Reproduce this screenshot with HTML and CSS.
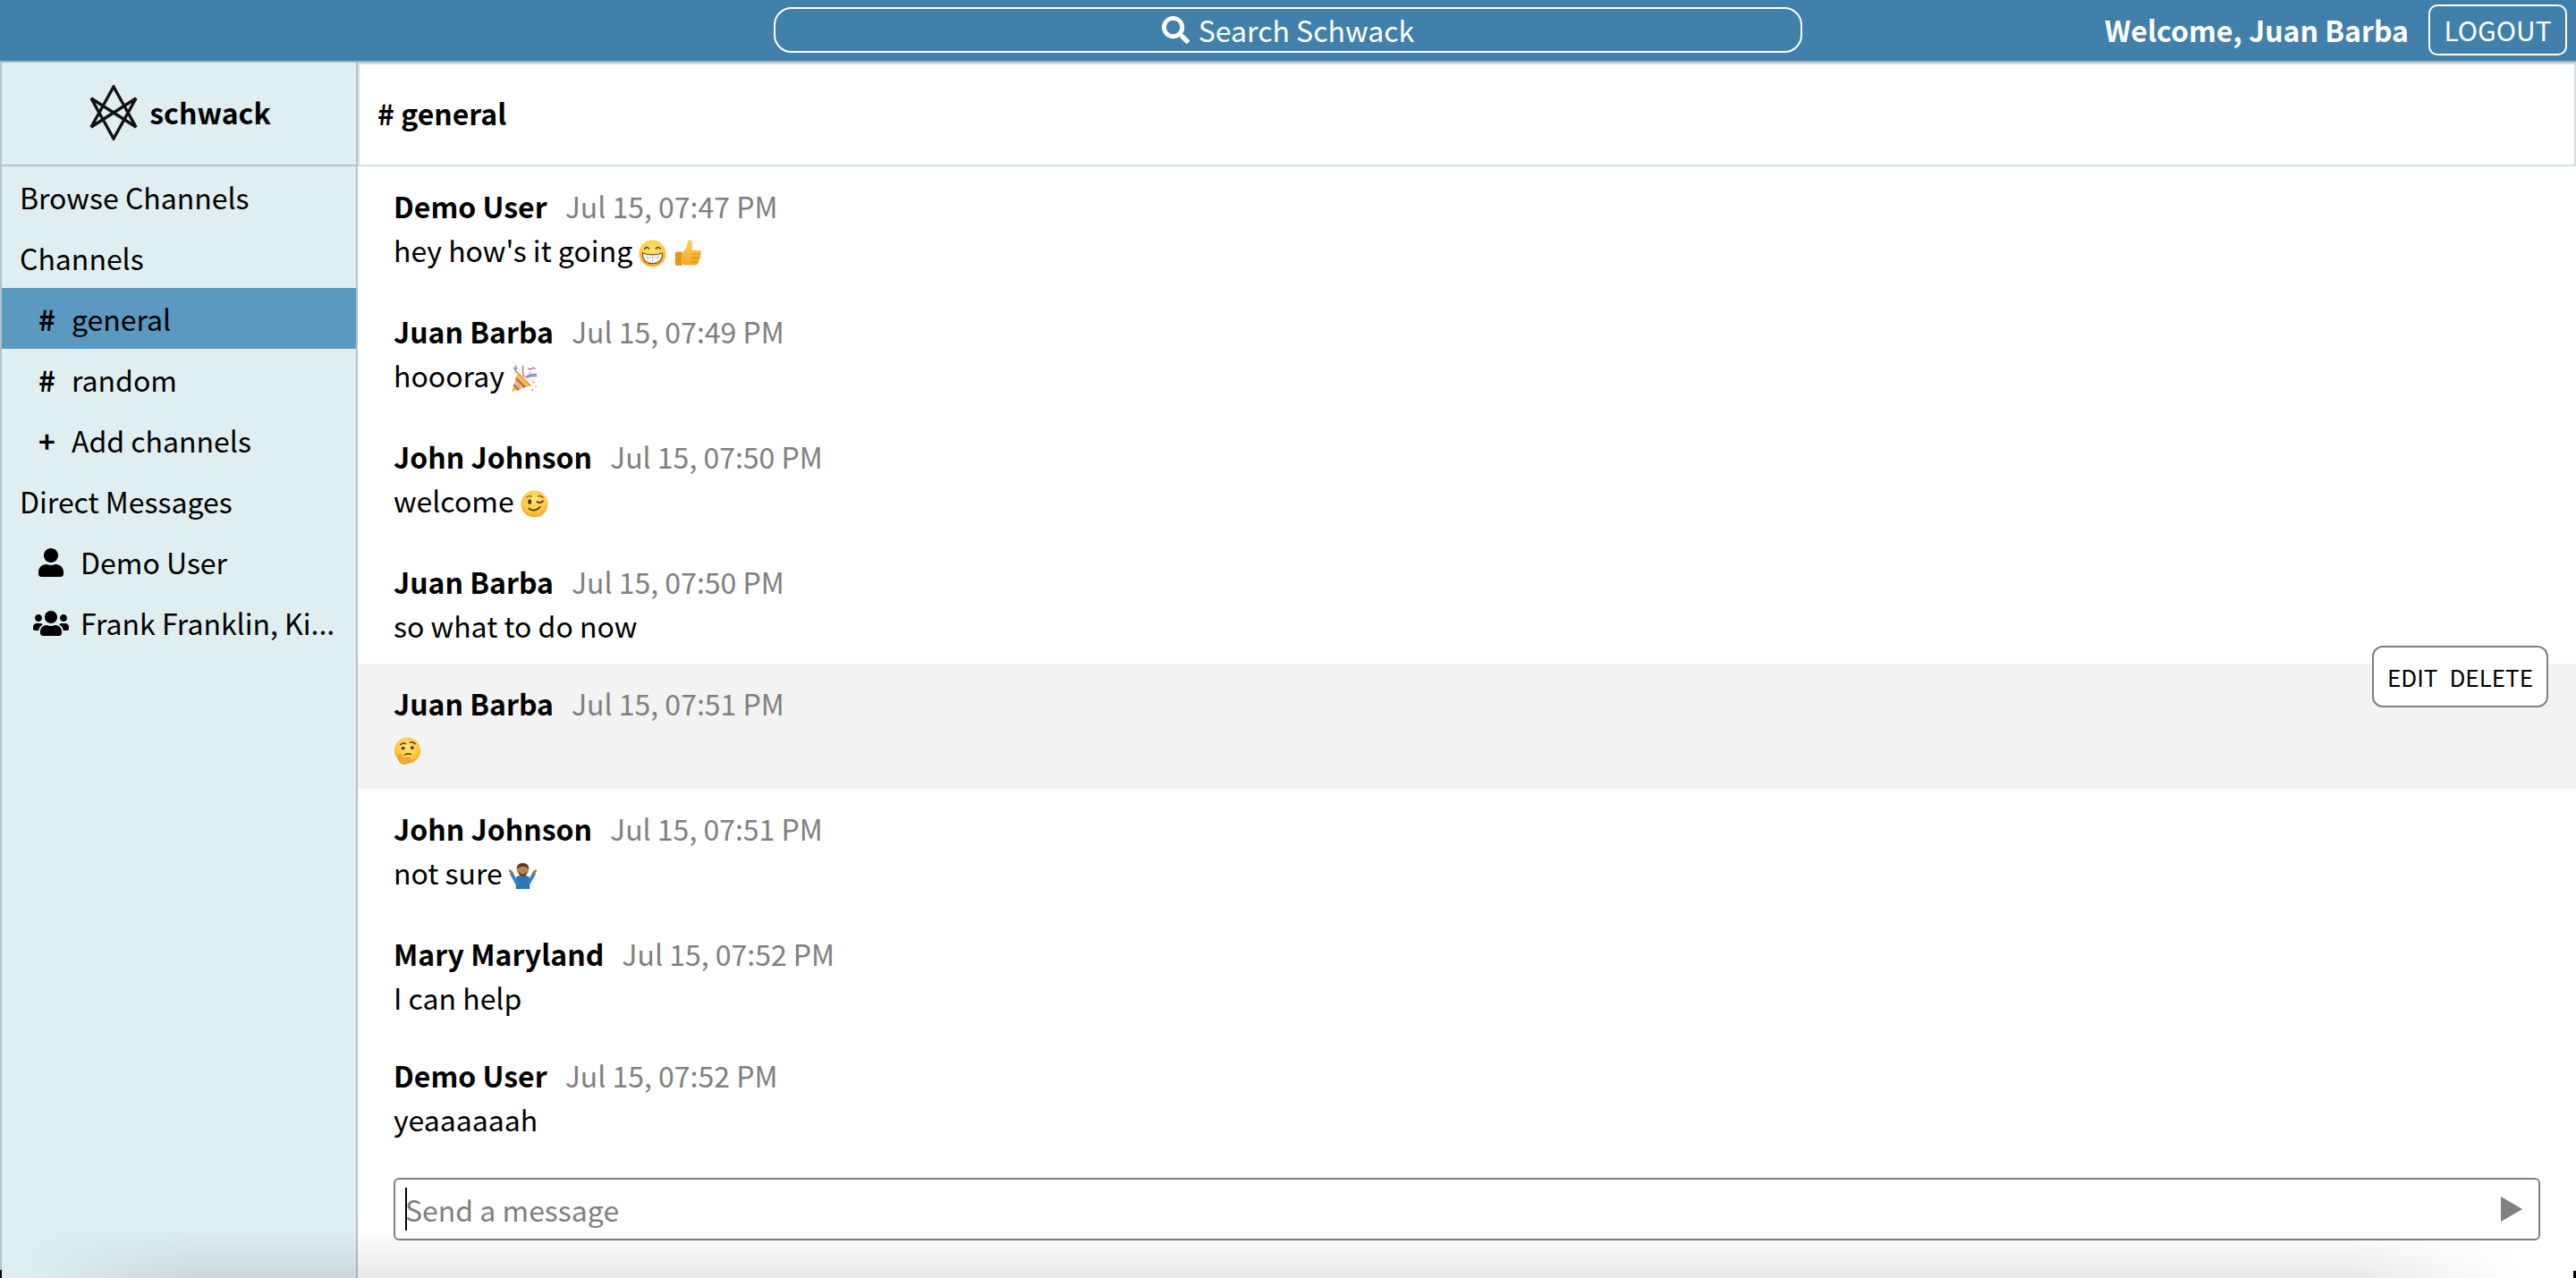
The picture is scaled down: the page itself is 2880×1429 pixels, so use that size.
FILE: index.html
```html
<!DOCTYPE html>
<html lang="en">
<head>
    <meta charset="UTF-8">
    <title>schwack</title>
    <link rel="stylesheet" href="styles.css">
</head>
<body>
    <svg class="defs" width="0" height="0" aria-hidden="true">
        <defs>
            <radialGradient id="faceFill" cx="50%" cy="35%" r="70%">
                <stop offset="0" stop-color="#ffe27a"/>
                <stop offset="0.65" stop-color="#fdc83f"/>
                <stop offset="1" stop-color="#f39a1d"/>
            </radialGradient>
            <linearGradient id="thumbFill" x1="0" y1="0" x2="0" y2="1">
                <stop offset="0" stop-color="#fdd35a"/>
                <stop offset="1" stop-color="#f5a623"/>
            </linearGradient>
        </defs>
    </svg>

    <header class="topbar">
        <div class="topbar-search">
            <button class="search-button">
                <svg class="search-icon" viewBox="0 0 512 512"><path d="M505 442.7L405.3 343c-4.5-4.5-10.6-7-17-7H372c27.6-35.3 44-79.7 44-128C416 93.1 322.9 0 208 0S0 93.1 0 208s93.1 208 208 208c48.3 0 92.7-16.4 128-44v16.3c0 6.4 2.5 12.5 7 17l99.7 99.7c9.4 9.4 24.6 9.4 33.9 0l28.3-28.3c9.4-9.4 9.4-24.6.1-34zM208 336c-70.7 0-128-57.2-128-128 0-70.7 57.2-128 128-128 70.7 0 128 57.2 128 128 0 70.7-57.2 128-128 128z"/></svg>
                Search Schwack
            </button>
        </div>
        <div class="topbar-user">
            <span class="welcome">Welcome, Juan Barba</span>
            <button class="logout">LOGOUT</button>
        </div>
    </header>

    <div class="layout">
        <aside class="sidebar">
            <div class="brand">
                <svg class="brand-logo" viewBox="0 0 54 62"><path d="M27 2 L52 47 L2 15 L27 60 L52 15 L2 47 Z"/></svg>
                <span>schwack</span>
            </div>
            <nav class="nav">
                <div class="nav-row">Browse Channels</div>
                <div class="nav-row">Channels</div>
                <div class="nav-row nav-sub nav-active"><span class="nav-mark">#</span>general</div>
                <div class="nav-row nav-sub"><span class="nav-mark">#</span>random</div>
                <div class="nav-row nav-sub"><span class="nav-mark">+</span>Add channels</div>
                <div class="nav-row">Direct Messages</div>
                <div class="nav-row nav-dm">
                    <span class="dm-icon"><svg class="user-icon" viewBox="0 0 448 512"><path d="M224 256c70.7 0 128-57.3 128-128S294.7 0 224 0 96 57.3 96 128s57.3 128 128 128zm89.6 32h-16.7c-22.2 10.2-46.9 16-72.9 16s-50.6-5.8-72.9-16h-16.7C60.2 288 0 348.2 0 422.4V464c0 26.5 21.5 48 48 48h352c26.5 0 48-21.5 48-48v-41.6c0-74.2-60.2-134.4-134.4-134.4z"/></svg></span>
                    <span class="dm-name">Demo User</span>
                </div>
                <div class="nav-row nav-dm">
                    <span class="dm-icon"><svg class="users-icon" viewBox="0 0 640 512"><path d="M96 224c35.3 0 64-28.7 64-64s-28.7-64-64-64-64 28.7-64 64 28.7 64 64 64zm448 0c35.3 0 64-28.7 64-64s-28.7-64-64-64-64 28.7-64 64 28.7 64 64 64zm32 32h-64c-17.6 0-33.5 7.1-45.1 18.6 40.3 22.1 68.9 62 75.1 109.4h66c17.7 0 32-14.3 32-32v-32c0-35.3-28.7-64-64-64zm-256 0c61.9 0 112-50.1 112-112S381.9 32 320 32 208 82.1 208 144s50.1 112 112 112zm76.8 32h-8.3c-20.8 10-43.9 16-68.5 16s-47.6-6-68.5-16h-8.3C179.6 288 128 339.6 128 403.2V432c0 26.5 21.5 48 48 48h288c26.5 0 48-21.5 48-48v-28.8c0-63.6-51.6-115.2-115.2-115.2zm-223.7-13.4C161.5 263.1 145.6 256 128 256H64c-35.3 0-64 28.7-64 64v32c0 17.7 14.3 32 32 32h65.9c6.3-47.4 34.9-87.3 75.2-109.4z"/></svg></span>
                    <span class="dm-name">Frank Franklin, Ki...</span>
                </div>
            </nav>
        </aside>

        <main class="main">
            <div class="channel-title"># general</div>

            <div class="messages">
                <div class="message message-emoji">
                    <div class="message-head"><span class="author">Demo User</span><span class="time">Jul 15, 07:47 PM</span></div>
                    <div class="message-text">hey how's it going
                        <svg class="emoji" viewBox="0 0 32 32"><circle cx="16" cy="16" r="15.5" fill="url(#faceFill)"/><path d="M7 10.5q2.5-3.5 5 0M20 10.5q2.5-3.5 5 0" fill="none" stroke="#6b3f10" stroke-width="1.6" stroke-linecap="round"/><path d="M4.5 15.5q11.500 4 23 0q0 12-11.500 12t-11.500-12z" fill="#fff" stroke="#7a4a12" stroke-width="1.200"/><path d="M5.500 20.500h21M10 17v9.500M16 18v9.500M22 17v9.500" stroke="#b9b9b9" stroke-width="0.800"/></svg>
                        <svg class="emoji" viewBox="0 0 32 32"><path d="M2 16q0-2 2-2h5q1 0 1 1v14q0 1-1 1H4q-2 0-2-2z" fill="#e8951c"/><path d="M10 15q5-4 6-10 0-5 3-5 4 1 2 12h8q3 0 3 3 0 2-1 2.500 1 1.500 0 3-.5 1-1 1.500.5 2-1 3-1 4.500-4 4.500H16q-4 0-6-2z" fill="url(#thumbFill)"/><path d="M21 16.500h9M21 21h8.500M21 25.500h7" stroke="#d98512" stroke-width="1.100" stroke-linecap="round"/></svg>
                    </div>
                </div>
                <div class="message message-emoji">
                    <div class="message-head"><span class="author">Juan Barba</span><span class="time">Jul 15, 07:49 PM</span></div>
                    <div class="message-text">hoooray
                        <svg class="emoji" viewBox="0 0 32 32"><path d="M1 31 8 9l15 15z" fill="#f6c03a"/><path d="M6 15.500 16.500 26M3.500 23 9.500 29" stroke="#a35fc4" stroke-width="2.400"/><path d="M8 9l15 15" stroke="#d9951f" stroke-width="1.500"/><path d="M5 1q3 2 1 4t2 4M14 1v8q0 3 2 5M20 4q3 2 5 0t3 1M18 15q5-3 12-2" fill="none" stroke="#e84b6f" stroke-width="1.300"/><path d="M3 3q3 1 2 3M17 14q6-4 13-3" fill="none" stroke="#4d8fe8" stroke-width="1.600"/><circle cx="26" cy="20" r="1.200" fill="#f08aa5"/><circle cx="29" cy="25" r="1" fill="#e8b44d"/><circle cx="25" cy="29" r="1.200" fill="#f08aa5"/><circle cx="22" cy="9" r="1" fill="#6ab0e8"/></svg>
                    </div>
                </div>
                <div class="message message-emoji">
                    <div class="message-head"><span class="author">John Johnson</span><span class="time">Jul 15, 07:50 PM</span></div>
                    <div class="message-text">welcome
                        <svg class="emoji" viewBox="0 0 32 32"><circle cx="16" cy="16" r="15.500" fill="url(#faceFill)"/><ellipse cx="10.500" cy="13.500" rx="2" ry="3" fill="#5b3510"/><path d="M19 13.500q3.500 2.500 7-1" fill="none" stroke="#5b3510" stroke-width="1.800" stroke-linecap="round"/><path d="M7 8.500q3-2.500 6-1M20 7q3-1 6 1.500" fill="none" stroke="#8a5a18" stroke-width="1.300" stroke-linecap="round"/><path d="M9.500 21q6 5.500 13-1.500" fill="none" stroke="#5b3510" stroke-width="1.800" stroke-linecap="round"/></svg>
                    </div>
                </div>
                <div class="message">
                    <div class="message-head"><span class="author">Juan Barba</span><span class="time">Jul 15, 07:50 PM</span></div>
                    <div class="message-text">so what to do now</div>
                </div>
                <div class="message message-emoji message-hover">
                    <div class="message-head"><span class="author">Juan Barba</span><span class="time">Jul 15, 07:51 PM</span></div>
                    <div class="message-text">
                        <svg class="emoji" viewBox="0 0 32 32"><circle cx="16" cy="15.500" r="15" fill="url(#faceFill)"/><path d="M8 9q3-3 6-1M19 6.500q3-1.500 6 1.500" fill="none" stroke="#5b3510" stroke-width="1.500" stroke-linecap="round"/><circle cx="11" cy="13" r="2" fill="#5b3510"/><circle cx="21.500" cy="12.500" r="2" fill="#5b3510"/><path d="M13 20.500q4-2 7-.5" fill="none" stroke="#5b3510" stroke-width="1.500" stroke-linecap="round"/><path d="M6 22q-1 4 1 7 2 3 6 2.500 5-1 6-5 1-2-.5-2.500-2-1-3.500 1l-4-1q-2-4-3-4-1 0-2 2z" fill="#f9ac2b" stroke="#d47f12" stroke-width="0.600"/></svg>
                    </div>
                    <div class="message-actions"><span>Edit</span><span>Delete</span></div>
                </div>
                <div class="message message-emoji">
                    <div class="message-head"><span class="author">John Johnson</span><span class="time">Jul 15, 07:51 PM</span></div>
                    <div class="message-text">not sure
                        <svg class="emoji" viewBox="0 0 32 32"><path d="M8 31V20q0-4 4-4.500h8q4 .5 4 4.500v11z" fill="#2f74b8"/><path d="M9 24 3 13M23 24l6-11" stroke="#3a82c8" stroke-width="4" stroke-linecap="round"/><path d="M1 10q2 1 3 3M31 10q-2 1-3 3" stroke="#a8744a" stroke-width="2.600" stroke-linecap="round"/><circle cx="16" cy="8.500" r="7" fill="#b98559"/><path d="M9 8q0-7 7-7t7 7q-3-3-7-3t-7 3z" fill="#5e3a22"/><path d="M11 11q5 6 10 0v1q-1 4-5 4t-5-4z" fill="#5e3a22"/></svg>
                    </div>
                </div>
                <div class="message">
                    <div class="message-head"><span class="author">Mary Maryland</span><span class="time">Jul 15, 07:52 PM</span></div>
                    <div class="message-text">I can help</div>
                </div>
                <div class="message">
                    <div class="message-head"><span class="author">Demo User</span><span class="time">Jul 15, 07:52 PM</span></div>
                    <div class="message-text">yeaaaaaah</div>
                </div>
            </div>

            <form class="composer">
                <span class="caret"></span>
                <input class="composer-input" type="text" placeholder="Send a message">
                <svg class="send-icon" viewBox="0 0 24 28"><path d="M0 0 24 14 0 28z"/></svg>
            </form>
        </main>
    </div>

    <div class="window-shadow"></div>
    <div class="corner corner-left"></div>
    <div class="corner corner-right"></div>
</body>
</html>
```

FILE: styles.css
```css
* {
    box-sizing: border-box;
}
html, body {
    height: 100%;
}
body {
    position: relative;
    display: flex;
    flex-direction: column;
    height: 1429px;
    margin: 0;
    overflow: hidden;
    background-color: #fff;
    color: #000;
    font-family: "Noto Sans CJK JP", "Noto Sans", sans-serif;
    font-size: 32px;
}
button, input {
    font-family: inherit;
    font-size: inherit;
}
.defs {
    position: absolute;
}

/* top bar */
.topbar {
    display: flex;
    flex: none;
    align-items: center;
    height: 70px;
    padding-bottom: 2px;
    background-color: #4280ac;
    border-bottom: 2px solid #a5b9c5;
    color: #fff;
}
.topbar-search {
    flex: none;
    width: 2025px;
    padding-left: 865px;
}
.search-button {
    display: flex;
    align-items: center;
    justify-content: center;
    width: 1150px;
    height: 51px;
    padding: 0;
    background: none;
    border: 2px solid #fff;
    border-radius: 20px;
    color: #fff;
    line-height: 1;
}
.search-icon {
    width: 31px;
    height: 31px;
    margin-right: 10px;
    fill: #fff;
}
.topbar-user {
    display: flex;
    flex: 1;
    align-items: center;
    justify-content: flex-end;
    padding-right: 10px;
}
.welcome {
    font-weight: 700;
    line-height: 1;
}
.logout {
    width: 155px;
    height: 57px;
    margin-left: 22px;
    padding: 0;
    background: none;
    border: 2px solid #fff;
    border-radius: 10px;
    color: #fff;
    font-size: 30px;
    line-height: 1;
}

/* page */
.layout {
    display: flex;
    flex: 1;
    min-height: 0;
}
.sidebar {
    flex: none;
    width: 400px;
    background-color: #dfeef1;
    border-left: 2px solid #b4c2c8;
    border-right: 2px solid #b4c2c8;
}
.brand {
    display: flex;
    align-items: center;
    justify-content: center;
    height: 116px;
    padding: 0 0 4px 3px;
    border-bottom: 2px solid #b4c2c8;
    font-weight: 700;
    line-height: 1;
}
.brand-logo {
    width: 54px;
    height: 62px;
    margin-top: 2px;
    margin-right: 13px;
    fill: none;
    stroke: #111;
    stroke-width: 3.4;
}
.nav-row {
    display: flex;
    align-items: center;
    height: 68px;
    padding-top: 2px;
    padding-left: 20px;
    line-height: 1.3;
    white-space: nowrap;
}
.nav-sub {
    padding-left: 41px;
}
.nav-active {
    background-color: #5b99c0;
}
.nav-mark {
    width: 37px;
    font-weight: 700;
}
.nav-dm {
    padding-left: 0;
}
.dm-icon {
    display: flex;
    flex: none;
    justify-content: center;
    width: 88px;
    padding-left: 38px;
    padding-right: 16px;
}
.dm-icon svg {
    flex: none;
}
.user-icon {
    width: 28px;
    height: 32px;
}
.users-icon {
    width: 40px;
    height: 32px;
}

/* channel */
.main {
    display: flex;
    flex: 1;
    flex-direction: column;
    min-width: 0;
}
.channel-title {
    display: flex;
    flex: none;
    align-items: center;
    height: 116px;
    padding: 0 0 4px 20px;
    border: 2px solid #d0dfe2;
    font-weight: 700;
    line-height: 1;
}
.messages {
    flex: 1;
}
.message {
    position: relative;
    height: 136px;
    padding: 18px 40px 0 40px;
}
.message-emoji {
    height: 140px;
}
.message-hover {
    background-color: #f3f3f3;
}
.message-head {
    display: flex;
    align-items: center;
    height: 52px;
}
.author {
    font-weight: 700;
}
.time {
    margin-left: 20px;
    color: #808080;
}
.message-text {
    height: 48px;
    margin-top: -1px;
    line-height: 48px;
}
.emoji {
    width: 31px;
    height: 31px;
    vertical-align: -6px;
}
.message-actions {
    position: absolute;
    top: -20px;
    right: 31px;
    display: flex;
    align-items: center;
    justify-content: space-between;
    width: 197px;
    height: 69px;
    padding: 0 15px;
    background-color: #fff;
    border: 2px solid #808080;
    border-radius: 12px;
    font-size: 26px;
    line-height: 1.3;
    text-transform: uppercase;
}

/* message box */
.composer {
    position: relative;
    display: flex;
    flex: none;
    align-items: center;
    height: 70px;
    margin: 0 40px 42px 40px;
    padding: 0 18px 0 11px;
    border: 2px solid #808080;
    border-radius: 6px;
}
.composer-input {
    flex: 1;
    min-width: 0;
    height: 100%;
    padding: 0;
    background: none;
    border: none;
    outline: none;
}
.composer-input::placeholder {
    color: #808080;
    opacity: 1;
}
.caret {
    position: absolute;
    top: 9px;
    left: 11px;
    width: 2px;
    height: 48px;
    background-color: #000;
}
.send-icon {
    flex: none;
    width: 24px;
    height: 28px;
    fill: #808080;
}

/* window edge of the screenshot */
.window-shadow {
    position: absolute;
    right: 0;
    bottom: 0;
    left: 0;
    height: 56px;
    background-image: linear-gradient(to top, rgba(0, 0, 0, 0.09), rgba(0, 0, 0, 0));
    -webkit-mask-image: linear-gradient(to right, transparent 30px, #000 220px, #000 calc(100% - 260px), transparent calc(100% - 60px));
    mask-image: linear-gradient(to right, transparent 30px, #000 220px, #000 calc(100% - 260px), transparent calc(100% - 60px));
    pointer-events: none;
}
.corner {
    position: absolute;
    bottom: 0;
    background-color: #000;
}
.corner-left {
    left: 0;
    width: 2px;
    height: 9px;
}
.corner-right {
    right: 0;
    width: 3px;
    height: 8px;
}
```
